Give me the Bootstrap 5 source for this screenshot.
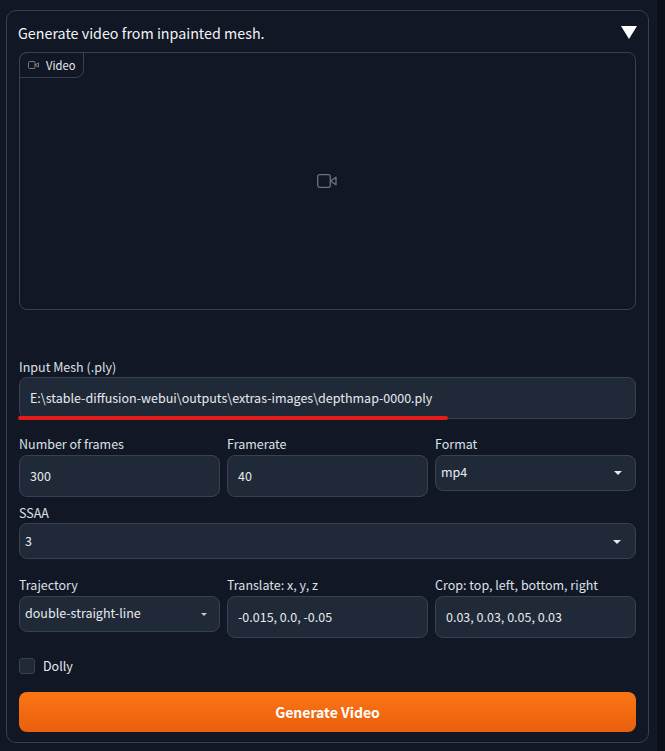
<!DOCTYPE html>
<html lang="en">
<head>
<meta charset="utf-8">
<title>Generate video</title>
<link href="https://cdn.jsdelivr.net/npm/bootstrap@5.3.0/dist/css/bootstrap.min.css" rel="stylesheet">
<style>
html,body{height:100%;}
body{background:#0b0f19;font-family:"Noto Sans CJK SC","Lato",sans-serif;font-size:12.5px;line-height:16px;color:#e8eaee;margin:0;overflow:hidden;}
.page-shell{width:657px;height:751px;background:#111725;padding:10px 8px 0 6px;}
.panel-box{height:733px;border:1px solid #374151;border-radius:10px;padding:12px 12px 9px 12px;}
.panel-head{height:29px;font-size:14.3px;line-height:20px;color:#f3f4f6;margin-left:-1px;}
.toggle-tri{width:0;height:0;border-left:8px solid transparent;border-right:8px solid transparent;border-top:13px solid #fff;margin-right:-1px;margin-top:3px;}
.video-box{height:258px;border:1px solid #374151;border-radius:8px;position:relative;}
.video-tab{position:absolute;left:-1px;top:-1px;width:65px;height:26px;border:1px solid #374151;border-radius:8px 0 8px 0;font-size:11.2px;color:#e8eaee;gap:7px;padding-left:8px;}
.stage-icon{margin-right:1px;}
.fld-label{font-size:12.5px;color:#dde0e5;line-height:16px;height:16px;margin-bottom:3px;}
.fld-label.snug{margin-bottom:2px;}
.txt-field{height:42px;background:#1f2937;border:1px solid #374151;border-radius:8px;color:#e8eaee;font-size:12.5px;padding:0 10px;line-height:39px;}
.pick-field{height:36px;background:#1f2937;border:1px solid #374151;border-radius:8px;color:#e8eaee;font-size:12.5px;padding:0 5px 2px;}
.pick-field.pick-low{padding-bottom:0;}
.pick-caret{width:0;height:0;border-left:4px solid transparent;border-right:4px solid transparent;border-top:4px solid #e5e7eb;margin-right:8px;margin-top:2px;}
.pick-caret.caret-wide{margin-right:9px;}
.pick-caret.caret-tiny{border-left-width:3px;border-right-width:3px;border-top-width:3px;border-top-color:#c4c8d0;margin-right:7px;}
.mesh-wrap{position:relative;margin-top:49px;}
.red-mark{position:absolute;left:-1px;top:57px;width:430px;height:4px;border-radius:2px;background:#e31b1b;}
.three-up{display:grid;grid-template-columns:repeat(3,1fr);gap:7px;}
.gap-frames{margin-top:17px;}
.gap-ssaa{margin-top:8px;}
.gap-traj{margin-top:18px;}
.tick-box{width:16px;height:16px;background:#1f2937;border:1px solid #374151;border-radius:3px;}
.dolly-row{margin-top:20px;height:16px;gap:8px;}
.go-btn{display:block;width:100%;height:40px;margin-top:18px;background:linear-gradient(180deg,#fb7514,#ea5f0d);border:0;border-radius:8px;color:#fff;font-weight:700;font-size:14px;}
.go-btn:hover{background:linear-gradient(180deg,#fb7514,#ea5f0d);color:#fff;}
</style>
</head>
<body>
<div class="page-shell">
  <div class="panel-box">
    <div class="panel-head d-flex justify-content-between align-items-start">
      <span>Generate video from inpainted mesh.</span>
      <span class="toggle-tri"></span>
    </div>
    <div class="video-box d-flex align-items-center justify-content-center">
      <div class="video-tab d-flex align-items-center">
        <svg width="11" height="8" viewBox="0 0 22 16" fill="none" stroke="#8b919c" stroke-width="1.6"><rect x="1" y="1" width="13" height="14" rx="2"/><path d="M14 8l7-4v8z" stroke-linejoin="round"/></svg>
        <span>Video</span>
      </div>
      <svg class="stage-icon" width="20" height="14" viewBox="0 0 20 14" fill="none" stroke="#6b7280" stroke-width="1.3"><rect x="0.7" y="0.7" width="12.6" height="12.6" rx="2"/><path d="M13.5 7l5.5-3.7v7.4z" stroke-linejoin="round"/></svg>
    </div>

    <div class="mesh-wrap">
      <div class="fld-label snug">Input Mesh (.ply)</div>
      <div class="txt-field">E:\stable-diffusion-webui\outputs\extras-images\depthmap-0000.ply</div>
      <div class="red-mark"></div>
    </div>

    <div class="three-up gap-frames">
      <div><div class="fld-label">Number of frames</div><div class="txt-field">300</div></div>
      <div><div class="fld-label">Framerate</div><div class="txt-field">40</div></div>
      <div><div class="fld-label">Format</div><div class="pick-field d-flex align-items-center justify-content-between"><span>mp4</span><span class="pick-caret"></span></div></div>
    </div>

    <div class="gap-ssaa">
      <div class="fld-label snug">SSAA</div>
      <div class="pick-field pick-low d-flex align-items-center justify-content-between"><span>3</span><span class="pick-caret caret-wide"></span></div>
    </div>

    <div class="three-up gap-traj">
      <div><div class="fld-label">Trajectory</div><div class="pick-field d-flex align-items-center justify-content-between"><span>double-straight-line</span><span class="pick-caret caret-tiny"></span></div></div>
      <div><div class="fld-label">Translate: x, y, z</div><div class="txt-field">-0.015, 0.0, -0.05</div></div>
      <div><div class="fld-label">Crop: top, left, bottom, right</div><div class="txt-field">0.03, 0.03, 0.05, 0.03</div></div>
    </div>

    <div class="dolly-row d-flex align-items-center">
      <span class="tick-box"></span><span>Dolly</span>
    </div>
    <button class="go-btn btn" type="button">Generate Video</button>
  </div>
</div>
<script src="https://cdn.jsdelivr.net/npm/bootstrap@5.3.0/dist/js/bootstrap.bundle.min.js"></script>
</body>
</html>
